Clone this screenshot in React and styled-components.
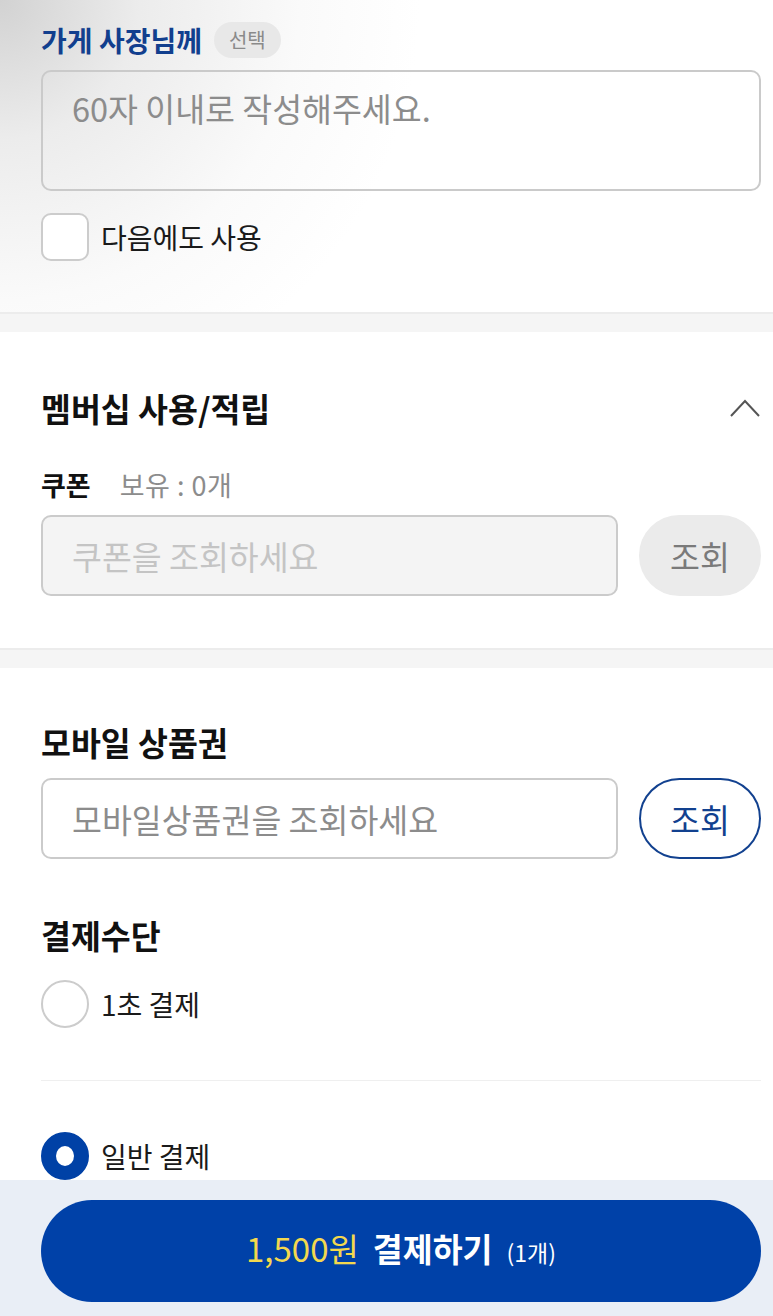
import styled, { createGlobalStyle } from "styled-components";

const GlobalStyle = createGlobalStyle`
  * { box-sizing: border-box; }
  body {
    margin: 0;
    background: #fff;
    font-family: "Noto Sans CJK KR", "Noto Sans", sans-serif;
    color: #111;
  }
`;

const Page = styled.div`
  width: 773px;
  min-height: 1316px;
  background: #fff;
`;

const Section = styled.section`
  padding: ${props => props.pad};
  padding-left: 41px;
  padding-right: 12px;
  display: flex;
  flex-direction: column;
  background: ${props =>
    props.shaded
      ? "radial-gradient(circle at 0 0, #d2d2d2 0, #ececec 140px, #fafafa 300px, #fff 420px)"
      : "#fff"};
`;

const Band = styled.div`
  height: 20px;
  background: #f5f5f5;
  border-top: 2px solid #ececec;
`;

const LabelRow = styled.div`
  display: flex;
  align-items: center;
  gap: 12px;
  height: 36px;
`;

const StoreTitle = styled.h2`
  margin: 0;
  font-size: 28px;
  font-weight: 700;
  line-height: 36px;
  color: #123f8e;
`;

const Badge = styled.span`
  height: 36px;
  padding: 0 15px;
  border-radius: 18px;
  background: #e8e8e8;
  color: #8a8a8a;
  font-size: 20px;
  line-height: 36px;
`;

const TextArea = styled.textarea`
  margin-top: 12px;
  width: 720px;
  height: 121px;
  border: 2px solid #cacaca;
  border-radius: 10px;
  padding: 16px 29px;
  resize: none;
  font-family: inherit;
  font-size: 32.5px;
  line-height: 40px;
  color: #222;
  background: transparent;
  &::placeholder { color: #8c8c8c; }
`;

const CheckRow = styled.label`
  margin-top: 22px;
  display: flex;
  align-items: center;
  gap: 12px;
  font-size: 28px;
  line-height: 48px;
  color: #1a1a1a;
`;

const CheckBox = styled.span`
  width: 48px;
  height: 48px;
  border: 2px solid #cccccc;
  border-radius: 10px;
  background: #fff;
`;

const TitleRow = styled.div`
  display: flex;
  align-items: center;
  justify-content: space-between;
  height: 40px;
`;

const Title = styled.h3`
  margin: 0;
  font-size: 32.5px;
  font-weight: 700;
  line-height: 40px;
  color: #111;
  margin-top: ${props => props.top || 0}px;
`;

const CouponRow = styled.div`
  margin-top: 40px;
  display: flex;
  align-items: baseline;
  gap: 29px;
  line-height: 34px;
`;

const CouponLabel = styled.span`
  font-size: 27px;
  font-weight: 700;
  color: #111;
`;

const CouponCount = styled.span`
  font-size: 27px;
  letter-spacing: 0.5px;
  color: #8c8c8c;
`;

const SearchRow = styled.div`
  margin-top: ${props => props.top}px;
  display: flex;
  gap: 21px;
`;

const Input = styled.input`
  width: 577px;
  height: 81px;
  border: 2px solid #cbcbcb;
  border-radius: 10px;
  padding: 0 29px;
  font-family: inherit;
  font-size: 32.5px;
  background: ${props => (props.disabled ? "#f4f4f4" : "#fff")};
  &::placeholder { color: ${props => (props.disabled ? "#c4c4c4" : "#8c8c8c")}; }
`;

const SearchButton = styled.button`
  width: 122px;
  height: 81px;
  border-radius: 41px;
  font-family: inherit;
  font-size: 32.5px;
  border: 2px solid ${props => (props.active ? "#12418f" : "#ebebeb")};
  background: ${props => (props.active ? "#fff" : "#ebebeb")};
  color: ${props => (props.active ? "#12418f" : "#7a7a7a")};
`;

const RadioRow = styled.label`
  margin-top: ${props => props.top}px;
  display: flex;
  align-items: center;
  gap: 12px;
  font-size: 28px;
  line-height: 48px;
  color: #1a1a1a;
`;

const Radio = styled.span`
  width: 48px;
  height: 48px;
  border-radius: 50%;
  display: flex;
  align-items: center;
  justify-content: center;
  border: 2px solid ${props => (props.checked ? "#0041a6" : "#cccccc")};
  background: ${props => (props.checked ? "#0041a6" : "#fff")};
  &::after {
    content: "";
    display: ${props => (props.checked ? "block" : "none")};
    width: 18px;
    height: 20px;
    border-radius: 50%;
    background: #fff;
  }
`;

const Divider = styled.hr`
  margin: 52px 0 0;
  border: 0;
  border-top: 1px solid #efefef;
`;

const BottomBar = styled.div`
  height: 136px;
  padding: 20px 12px 14px 41px;
  background: #e9eef6;
`;

const PayButton = styled.button`
  width: 720px;
  height: 102px;
  border: 0;
  border-radius: 51px;
  background: #0041a8;
  display: flex;
  align-items: baseline;
  justify-content: center;
  padding-top: 28px;
  gap: 14px;
  font-family: inherit;
`;

const Price = styled.span`
  color: #f3d84e;
  font-size: 33px;
  line-height: 40px;
`;

const PayLabel = styled.span`
  color: #fff;
  font-size: 32.5px;
  font-weight: 700;
  line-height: 40px;
`;

const Count = styled.span`
  color: #fff;
  font-size: 23px;
  line-height: 40px;
`;

const Chevron = () => (
  <svg width="32" height="20" viewBox="0 0 32 20" fill="none">
    <path d="M2 18L16 3L30 18" stroke="#555" strokeWidth="2" />
  </svg>
);

export default function App() {
  return (
    <Page>
      <GlobalStyle />
      <Section shaded pad="22px 0 51px">
        <LabelRow>
          <StoreTitle>가게 사장님께</StoreTitle>
          <Badge>선택</Badge>
        </LabelRow>
        <TextArea placeholder="60자 이내로 작성해주세요." />
        <CheckRow>
          <CheckBox />
          다음에도 사용
        </CheckRow>
      </Section>
      <Band />
      <Section pad="56px 0 52px">
        <TitleRow>
          <Title>멤버십 사용/적립</Title>
          <Chevron />
        </TitleRow>
        <CouponRow>
          <CouponLabel>쿠폰</CouponLabel>
          <CouponCount>보유 : 0개</CouponCount>
        </CouponRow>
        <SearchRow top={13}>
          <Input disabled placeholder="쿠폰을 조회하세요" />
          <SearchButton>조회</SearchButton>
        </SearchRow>
      </Section>
      <Band />
      <Section pad="54px 0 0">
        <Title>모바일 상품권</Title>
        <SearchRow top={16}>
          <Input placeholder="모바일상품권을 조회하세요" />
          <SearchButton active>조회</SearchButton>
        </SearchRow>
        <Title top={56}>결제수단</Title>
        <RadioRow top={25}>
          <Radio />
          1초 결제
        </RadioRow>
        <Divider />
        <RadioRow top={51}>
          <Radio checked />
          일반 결제
        </RadioRow>
      </Section>
      <BottomBar>
        <PayButton>
          <Price>1,500원</Price>
          <PayLabel>결제하기</PayLabel>
          <Count>(1개)</Count>
        </PayButton>
      </BottomBar>
    </Page>
  );
}
